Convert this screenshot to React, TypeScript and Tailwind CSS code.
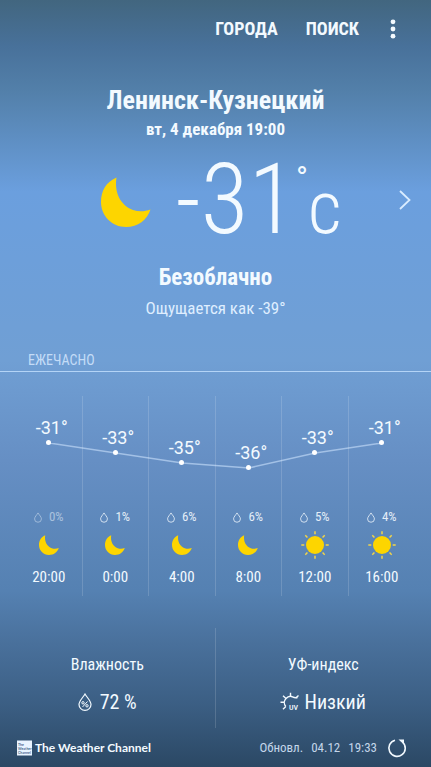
import React from "react";

type Hour = { time: string; temp: number; rain: number; sky: "moon" | "sun" };

const hours: Hour[] = [
  { time: "20:00", temp: -31, rain: 0, sky: "moon" },
  { time: "0:00", temp: -33, rain: 1, sky: "moon" },
  { time: "4:00", temp: -35, rain: 6, sky: "moon" },
  { time: "8:00", temp: -36, rain: 6, sky: "moon" },
  { time: "12:00", temp: -33, rain: 5, sky: "sun" },
  { time: "16:00", temp: -31, rain: 4, sky: "sun" },
];

const PX_PER_DEGREE = 5;
const maxTemp = Math.max(...hours.map((h) => h.temp));
const drop = (temp: number) => (maxTemp - temp) * PX_PER_DEGREE;

function Moon({ className }: { className: string }) {
  return (
    <svg viewBox="0 0 50 50" className={className} aria-hidden="true">
      <path
        d="M15.500 0.500C5 5 0 14 0 25C0 39 11 50 25 50C37 50 46 43 49.500 32.500C44 34.500 38 35 32 33C20 28.500 13 16 15.500 0.500Z"
        fill="#fdd500"
      />
    </svg>
  );
}

function Sun({ className }: { className: string }) {
  return (
    <svg viewBox="0 0 28 28" className={className} aria-hidden="true">
      <circle cx="14" cy="14" r="9" fill="#fdd500" />
      {[0, 45, 90, 135, 180, 225, 270, 315].map((a) => (
        <path
          key={a}
          d="M14 0.300V3.300"
          stroke="#f3d548"
          strokeWidth="1.500"
          transform={`rotate(${a} 14 14)`}
        />
      ))}
    </svg>
  );
}

function Drop({ className, percent }: { className: string; percent?: boolean }) {
  return (
    <svg viewBox="0 0 14 18" className={className} fill="none" stroke="currentColor" aria-hidden="true">
      <path d="M7 1C5 4.500 1 8 1 11.500A6 5.800 0 0 0 13 11.500C13 8 9 4.500 7 1Z" strokeWidth={percent ? 1.2 : 1.5} />
      {percent && (
        <g strokeWidth="1">
          <path d="M9.500 8.500L4.500 14" />
          <circle cx="5" cy="9.800" r="1.200" />
          <circle cx="9" cy="12.800" r="1.200" />
        </g>
      )}
    </svg>
  );
}

function UvIcon() {
  return (
    <svg viewBox="0 0 20 20" className="h-5 w-5" fill="none" stroke="currentColor" aria-hidden="true">
      <path d="M5.800 14.500A6 6 0 0 1 6 6.500C7.500 4.700 9 4.200 10.500 4.200C12.500 4.200 13.500 6.500 17.500 5.500" strokeWidth="1.400" />
      <path d="M0.500 10.300H4M3 3.800L6 6.500M10.500 0.800V4.200M18.500 3.500L16 5.800M3 17.200L5.800 14.500" strokeWidth="1.400" />
      <text x="9" y="18" fontSize="8" fontWeight="500" fill="currentColor" stroke="none">
        UV
      </text>
    </svg>
  );
}

export default function App() {
  return (
    <main className="flex min-h-screen flex-col bg-[linear-gradient(180deg,#42667f_0%,#48719a_6%,#5380aa_12%,#6b9fde_25%,#709fd4_47%,#668fc4_60%,#5581b2_77%,#49709b_84%,#3b5e83_92%,#2b4864_100%)] font-['Roboto_Condensed','Roboto',sans-serif] text-[#f3faff]">
      <header className="flex h-[58px] items-center justify-end gap-7 pr-8 text-lg font-bold">
        <button type="button">ГОРОДА</button>
        <button type="button">ПОИСК</button>
        <button type="button" aria-label="Ещё" className="flex w-3 justify-center">
          <svg viewBox="0 0 6 20" className="h-5 w-1.5" fill="currentColor" aria-hidden="true">
            <circle cx="3" cy="2.800" r="2.400" />
            <circle cx="3" cy="10" r="2.400" />
            <circle cx="3" cy="17.200" r="2.400" />
          </svg>
        </button>
      </header>

      <section className="flex flex-col items-center pt-[26px]">
        <h1 className="text-[26px] leading-8 font-bold">Ленинск-Кузнецкий</h1>
        <p className="text-[17px] leading-[26px] font-bold">вт, 4 декабря 19:00</p>
        <div className="grid w-full grid-cols-[1fr_auto_1fr] items-center pt-5">
          <span />
          <div className="flex h-20 items-center gap-6 pl-3">
            <Moon className="h-[50px] w-[50px]" />
            <p className="flex items-baseline pt-1 leading-20 font-light">
              <span className="text-[98px]">-31</span>
              <span className="self-start text-[32px] leading-9 font-normal">°</span>
              <span className="text-[74px]">c</span>
            </p>
          </div>
          <button type="button" aria-label="Следующий город" className="mr-5 justify-self-end pb-1">
            <svg viewBox="0 0 12 20" className="h-5 w-3" fill="none" stroke="#d9ecff" strokeWidth="1.800" aria-hidden="true">
              <path d="M1 1L10.500 10L1 19" />
            </svg>
          </button>
        </div>
        <h2 className="pt-5 text-[23px] leading-8 font-bold">Безоблачно</h2>
        <p className="pt-0.5 text-[17px] leading-6 text-[#dfeeff]">Ощущается как -39°</p>
      </section>

      <section className="pt-8">
        <h3 className="h-5 border-b border-[#b4d4f6] px-7 text-sm leading-4 text-[#c4dcf7]">ЕЖЕЧАСНО</h3>
        <div className="relative mt-6 px-4">
          <svg
            viewBox="0 0 6 50"
            preserveAspectRatio="none"
            className="absolute inset-x-4 top-[47px] h-[50px] w-[calc(100%-32px)]"
            fill="none"
            aria-hidden="true"
          >
            <polyline
              points={hours.map((h, i) => `${i + 0.5},${drop(h.temp)}`).join(" ")}
              stroke="#a3c1e6"
              strokeWidth="1.500"
              vectorEffect="non-scaling-stroke"
            />
          </svg>
          <ol className="relative grid grid-cols-6 divide-x divide-white/15">
            {hours.map((h) => (
              <li key={h.time} className="flex h-50 flex-col items-center">
                <div className="flex h-[111px] flex-col items-center" style={{ paddingTop: drop(h.temp) }}>
                  <span className="mt-5 pl-1.5 font-['Roboto',sans-serif] text-lg leading-6">{h.temp}°</span>
                  <span className="h-[5px] w-[5px] rounded-full bg-white" />
                </div>
                <span className={`flex items-center gap-[7px] text-[13px] leading-5 ${h.rain === 0 ? "opacity-50" : "opacity-90"}`}>
                  <Drop className="h-[11px] w-2" />
                  {h.rain}%
                </span>
                <span className="flex h-9 items-center">
                  {h.sky === "moon" ? <Moon className="h-5 w-5" /> : <Sun className="h-7 w-7" />}
                </span>
                <time className="pt-1 text-[15px] leading-5">{h.time}</time>
              </li>
            ))}
          </ol>
        </div>
      </section>

      <section className="mt-8 grid h-25 grid-cols-2 divide-x divide-white/15 text-center">
        <div className="flex flex-col items-center pt-[25px]">
          <h3 className="text-base leading-6">Влажность</h3>
          <p className="flex items-center gap-2 pt-[11px] text-xl leading-7">
            <Drop percent className="h-[18px] w-3.5" />
            72 %
          </p>
        </div>
        <div className="flex flex-col items-center pt-[25px]">
          <h3 className="text-base leading-6">УФ-индекс</h3>
          <p className="flex items-center gap-1 pt-[11px] text-xl leading-7">
            <UvIcon />
            Низкий
          </p>
        </div>
      </section>

      <footer className="flex h-[39px] items-center justify-between pr-6 pl-4">
        <a href="#weather-channel" className="flex items-center gap-[3px] font-['Lato',sans-serif] text-xs font-bold">
          <svg viewBox="0 0 16 16" className="h-4 w-4" aria-hidden="true">
            <rect x="1" y="0.500" width="15" height="15" fill="#e9f4ff" />
            <g fill="#46688c" fontSize="3.500" fontWeight="700">
              <text x="2" y="6">The</text>
              <text x="2" y="10">Weather</text>
              <text x="2" y="14">Channel</text>
            </g>
          </svg>
          The Weather Channel
        </a>
        <div className="flex items-center gap-2.5 text-[13px] text-[#c4d6ea]">
          <span className="flex gap-2">
            <span>Обновл.</span>
            <span>04.12</span>
            <span>19:33</span>
          </span>
          <button type="button" aria-label="Обновить" className="text-[#f3faff]">
            <svg viewBox="0 0 20 20" className="h-5 w-5" fill="none" stroke="currentColor" aria-hidden="true">
              <path d="M8 2.200A8.200 8.200 0 1 0 15.500 4" strokeWidth="1.600" />
              <path d="M11.500 1.500H17V6.500Z" fill="currentColor" stroke="none" />
            </svg>
          </button>
        </div>
      </footer>
    </main>
  );
}
